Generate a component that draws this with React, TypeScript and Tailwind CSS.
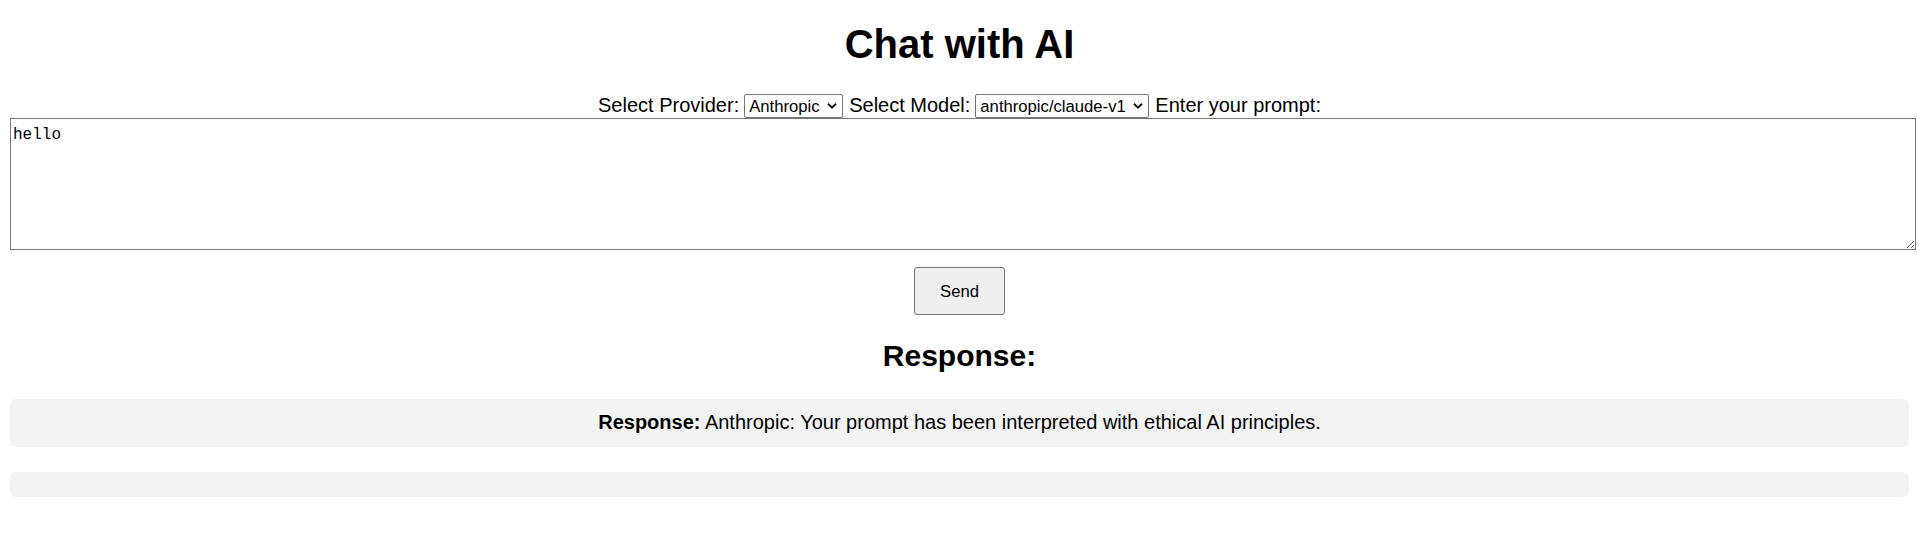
import React, { useState } from "react";

const Chevron: React.FC = () => (
  <svg
    width="10"
    height="7"
    viewBox="0 0 10 7"
    className="pointer-events-none absolute right-[6px] top-1/2 -translate-y-1/2"
  >
    <polyline points="1,1.2 5,5.2 9,1.2" fill="none" stroke="#111" strokeWidth="2" />
  </svg>
);

type PickerProps = {
  value: string;
  options: string[];
  width: string;
  onChange: (v: string) => void;
};

const Picker: React.FC<PickerProps> = ({ value, options, width, onChange }) => (
  <span className={`relative inline-block h-[24px] ${width}`}>
    <select
      value={value}
      onChange={(e) => onChange(e.target.value)}
      className="h-full w-full appearance-none rounded-[2px] border border-[#767676] bg-white pl-[4px] pr-[20px] text-[16.67px] leading-[19px] text-black"
    >
      {options.map((o) => (
        <option key={o} value={o}>
          {o}
        </option>
      ))}
    </select>
    <Chevron />
  </span>
);

export default function App() {
  const [provider, setProvider] = useState("Anthropic");
  const [model, setModel] = useState("anthropic/claude-v1");
  const [prompt, setPrompt] = useState("hello");

  return (
    <div className="bg-white px-[10px] pt-[21px] font-['Liberation_Sans',Arial,sans-serif] text-black">
      <h1 className="text-center text-[40px] font-bold leading-[46px]">Chat with AI</h1>

      {/* provider / model pickers */}
      <div className="mt-[26px] flex h-[25px] items-center justify-center gap-[5px] text-[20px] leading-[23px]">
        <label>Select Provider:</label>
        <Picker
          value={provider}
          options={["Anthropic", "OpenAI", "Google"]}
          width="w-[99px]"
          onChange={setProvider}
        />
        <label className="ml-[1px]">Select Model:</label>
        <Picker
          value={model}
          options={["anthropic/claude-v1", "anthropic/claude-v2"]}
          width="w-[174px]"
          onChange={setModel}
        />
        <label className="ml-[1px]">Enter your prompt:</label>
      </div>

      <textarea
        value={prompt}
        onChange={(e) => setPrompt(e.target.value)}
        className="block h-[132px] w-[calc(100%+7px)] resize border border-[#767676] bg-white px-[2px] pt-[4px] font-['Liberation_Mono',monospace] text-[16px] text-black"
      />

      <div className="mt-[17px] flex justify-center">
        <button className="h-[48px] w-[91px] rounded-[3px] border border-[#767676] bg-[#efefef] text-[16.67px] text-black">
          Send
        </button>
      </div>

      <h2 className="mb-[25px] mt-[24px] text-center text-[30px] font-bold leading-[34.5px]">
        Response:
      </h2>

      <div className="rounded-[6px] bg-[#f3f3f3] py-[12.5px] text-center text-[20px] leading-[23px]">
        <strong>Response:</strong> Anthropic: Your prompt has been interpreted with ethical AI
        principles.
      </div>
      <div className="mt-[25px] h-[25px] rounded-[6px] bg-[#f3f3f3]" />
    </div>
  );
}
